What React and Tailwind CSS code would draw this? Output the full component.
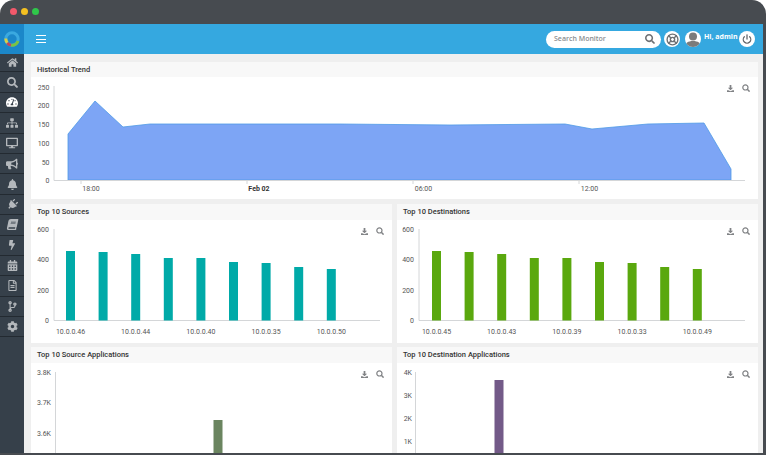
import React from 'react';
import {
  FaHome, FaSearch, FaTachometerAlt, FaSitemap, FaDesktop, FaBullhorn, FaBell, FaPlug,
  FaBook, FaBolt, FaCalendarAlt, FaRegFileAlt, FaCodeBranch, FaCog,
} from 'react-icons/fa';
import { LifeBuoy, Power } from 'lucide-react';

const navItems = [
  { icon: FaHome, size: 11 },
  { icon: FaSearch, size: 11 },
  { icon: FaTachometerAlt, size: 12, active: true },
  { icon: FaSitemap, size: 12 },
  { icon: FaDesktop, size: 12 },
  { icon: FaBullhorn, size: 12 },
  { icon: FaBell, size: 11 },
  { icon: FaPlug, size: 11, tilt: 'rotate-45' },
  { icon: FaBook, size: 11, tilt: '-skew-x-12' },
  { icon: FaBolt, size: 10 },
  { icon: FaCalendarAlt, size: 11 },
  { icon: FaRegFileAlt, size: 11 },
  { icon: FaCodeBranch, size: 11 },
  { icon: FaCog, size: 11 },
];

const AXIS = '#d4d6d8';

const sourceBars = [251, 252, 254, 258, 258, 262, 263, 267, 269];
const destBars = [251, 252, 254, 258, 258, 262, 263, 267, 269];
const trend = '68,180 68,134 95,101 123,127 150,124 230,124 340,124 450,125 565,124 592,129 648,124 704,123 731,169 731,180';

// svg text label, coordinates are page coordinates through the viewBox
const Label = ({ x, y, anchor = 'end', bold, children }) => (
  <text
    x={x}
    y={y}
    textAnchor={anchor}
    className={`[font-family:Roboto,sans-serif] text-[7px] ${bold ? 'font-bold fill-[#333333]' : 'fill-[#555555]'}`}
  >
    {children}
  </text>
);

const Tools = ({ top }) => (
  <div className={`absolute right-[8px] flex items-center gap-[8px] text-[#808285] ${top}`}>
    <svg width="7" height="7" viewBox="0 0 8 8" fill="currentColor">
      <path d="M3 0h2v3h2L4 6 1 3h2zM0 6h1.6L4 7l2.4-1H8v2H0z" />
    </svg>
    <svg width="8" height="8" viewBox="0 0 8 8" fill="none" stroke="currentColor" strokeWidth="1.2">
      <circle cx="3.4" cy="3.4" r="2.6" />
      <path d="M5.3 5.3 7.6 7.6" strokeWidth="1.5" />
    </svg>
  </div>
);

const Card = ({ title, box, head, toolsTop, children }) => (
  <div className="relative bg-white">
    <div className={`bg-[#f8f8f8] pl-[6px] flex items-center text-[7.500px] font-medium text-[#333333] ${head}`}>{title}</div>
    <svg viewBox={box} className="block w-full">{children}</svg>
    <Tools top={toolsTop} />
  </div>
);

const BarChart = ({ axisX, labelX, bars, first, color, labels }) => (
  <>
    <path d={`M${axisX} 229V320.5H${axisX + 326}`} fill="none" stroke={AXIS} strokeWidth="1" />
    {[[600, 231.500], [400, 261.500], [200, 292.500], [0, 322.500]].map(([t, y]) => (
      <Label key={t} x={labelX} y={y}>{t}</Label>
    ))}
    {bars.map((top, i) => (
      <rect key={i} x={first + i * 32.6 - 4.5} y={top} width="9" height={320.5 - top} fill={color} />
    ))}
    {labels.map((l, i) => (
      <Label key={l} x={first + i * 65.2} y={333.500} anchor="middle">{l}</Label>
    ))}
  </>
);

export default function App() {
  return (
    <div className="w-[766px] h-[455px] overflow-hidden bg-white [font-family:Roboto,sans-serif]">
      <div className="w-[766px] h-[455px] rounded-t-[14px] bg-[#474b50] pr-[3px] pb-[2px] flex flex-col">
        <div className="h-6 shrink-0 flex items-center gap-[4px] pl-[10px] pb-[1px]">
          <span className="w-[7px] h-[7px] rounded-full bg-[#f2596b]" />
          <span className="w-[7px] h-[7px] rounded-full bg-[#f4c021]" />
          <span className="w-[7px] h-[7px] rounded-full bg-[#2fc74a]" />
        </div>

        <div className="flex-1 flex min-h-0">
          <aside className="w-6 shrink-0 bg-[#36404a] flex flex-col">
            <div className="h-[30px] shrink-0 bg-[#1b87c9] flex items-center justify-center">
              <svg width="18" height="18" viewBox="0 0 18 18" fill="none" strokeWidth="3" className="-ml-px">
                <circle cx="9" cy="9" r="6.200" stroke="#3aa9e0" />
                <path d="M15 11A6.200 6.200 0 0 1 8 15.100" stroke="#7cc243" />
                <path d="M8 15.100A6.200 6.200 0 0 1 4.200 12.800" stroke="#c2455c" />
                <path d="M4.200 12.800A6.200 6.200 0 0 1 2.800 8.500" stroke="#d9cf45" />
              </svg>
            </div>
            {navItems.map(({ icon: Icon, size, active, tilt }, i) => (
              <div
                key={i}
                className={`${i === 0 ? 'h-[18.4px]' : 'h-[20.4px]'} shrink-0 flex items-center justify-center border-b border-[#232a31] ${active ? 'text-white' : 'text-[#b4b8bc]'}`}
              >
                <Icon size={size} className={tilt} />
              </div>
            ))}
          </aside>

          <div className="flex-1 min-w-0 flex flex-col">
            <header className="h-[30px] shrink-0 bg-[#35a8e0] flex items-center pl-3 pr-2">
              <div className="flex flex-col gap-[2.4px]">
                <span className="block w-[10px] h-px bg-white" />
                <span className="block w-[10px] h-px bg-white" />
                <span className="block w-[10px] h-px bg-white" />
              </div>
              <div className="ml-auto flex items-center">
                <div className="w-[115px] h-[17px] rounded-full bg-white flex items-center justify-between pl-2 pr-[6px]">
                  <span className="[font-family:'Open_Sans',sans-serif] text-[7px] font-semibold text-[#8a8d90]">Search Monitor</span>
                  <FaSearch size={10} className="text-[#6d7074]" />
                </div>
                <div className="ml-[3px] w-4 h-4 rounded-full bg-white flex items-center justify-center">
                  <LifeBuoy size={13} strokeWidth={2.5} className="text-[#6d7074]" />
                </div>
                <div className="ml-[5px] w-4 h-4 rounded-full bg-white overflow-hidden">
                  <svg width="16" height="16" viewBox="0 0 16 16" fill="#7b7b7b">
                    <circle cx="8" cy="5.500" r="4" />
                    <path d="M0 16c0-4 3-6 8-6s8 2 8 6z" />
                  </svg>
                </div>
                <span className="w-[32px] ml-[3px] mb-[4px] whitespace-nowrap [font-family:'Open_Sans',sans-serif] text-[7px] font-bold text-white">Hi, admin</span>
                <div className="ml-[3px] w-4 h-4 rounded-full bg-white flex items-center justify-center">
                  <Power size={10} strokeWidth={3} className="text-[#5f6368]" />
                </div>
              </div>
            </header>

            <main className="flex-1 min-h-0 overflow-hidden bg-[#efefef] pt-2 pl-[7px] pr-[5px] flex flex-col">
              <Card title="Historical Trend" box="31 77 727 122" head="h-[15px]" toolsTop="top-[22px]">
                <polygon points={trend} fill="#7da5f5" stroke="#4f9ae6" strokeWidth="0.8" />
                <path d="M54 86V180.5H745" fill="none" stroke={AXIS} strokeWidth="1" />
                <path d="M81 181v3M247 181v3M413 181v3M579 181v3" stroke={AXIS} strokeWidth="1" />
                {[[250, 89.500], [200, 108], [150, 127], [100, 145.500], [50, 164.500], [0, 183]].map(([v, y]) => (
                  <Label key={v} x={49.500} y={y}>{v}</Label>
                ))}
                <Label x={91} y={190.500} anchor="middle">18:00</Label>
                <Label x={259} y={190.500} anchor="middle" bold>Feb 02</Label>
                <Label x={423.500} y={190.500} anchor="middle">06:00</Label>
                <Label x={589.500} y={190.500} anchor="middle">12:00</Label>
              </Card>

              <div className="mt-[5px] grid grid-cols-2 gap-[5px]">
                <Card title="Top 10 Sources" box="31 220 361 123" head="h-[16px]" toolsTop="top-[23px]">
                  <BarChart
                    axisX={54}
                    labelX={49}
                    bars={sourceBars}
                    first={70.5}
                    color="#00aaa8"
                    labels={['10.0.0.46', '10.0.0.44', '10.0.0.40', '10.0.0.35', '10.0.0.50']}
                  />
                </Card>
                <Card title="Top 10 Destinations" box="397 220 361 123" head="h-[16px]" toolsTop="top-[23px]">
                  <BarChart
                    axisX={419}
                    labelX={414}
                    bars={destBars}
                    first={436.5}
                    color="#5aa80e"
                    labels={['10.0.0.45', '10.0.0.43', '10.0.0.39', '10.0.0.33', '10.0.0.49']}
                  />
                </Card>
              </div>

              <div className="mt-1 grid grid-cols-2 gap-[5px]">
                <Card title="Top 10 Source Applications" box="31 363 361 122" head="h-[16px]" toolsTop="top-[23px]">
                  <path d="M55.500 372V485" stroke={AXIS} strokeWidth="1" />
                  {[['3.8K', 374.500], ['3.7K', 404.500], ['3.6K', 435.500]].map(([t, y]) => (
                    <Label key={t} x={51} y={y}>{t}</Label>
                  ))}
                  <rect x="213.500" y="420" width="9" height="65" fill="#6b8560" />
                </Card>
                <Card title="Top 10 Destination Applications" box="397 363 361 122" head="h-[16px]" toolsTop="top-[23px]">
                  <path d="M415.500 372V485" stroke={AXIS} strokeWidth="1" />
                  {[['4K', 374.500], ['3K', 397.500], ['2K', 420.500], ['1K', 443.500]].map(([t, y]) => (
                    <Label key={t} x={412} y={y}>{t}</Label>
                  ))}
                  <rect x="494.500" y="380" width="9" height="105" fill="#735a88" />
                </Card>
              </div>
            </main>
          </div>
        </div>
      </div>
    </div>
  );
}
